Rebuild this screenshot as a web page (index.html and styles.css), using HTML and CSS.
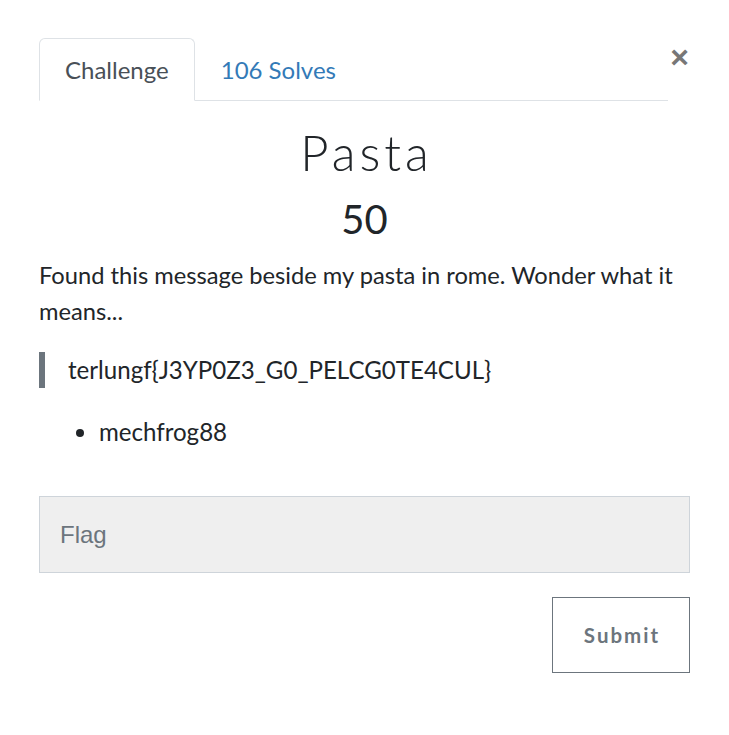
FILE: index.html
```html
<!DOCTYPE html>
<html>
<head>
<meta charset="utf-8">
<link rel="stylesheet" href="styles.css">
</head>
<body>
<div class="modal">
  <div class="header">
    <ul class="tabs">
      <li class="tab active">Challenge</li>
      <li class="tab link">106 Solves</li>
    </ul>
    <button class="close" aria-label="Close">&times;</button>
  </div>
  <h2 class="title">Pasta</h2>
  <h3 class="value">50</h3>
  <p class="desc">Found this message beside my pasta in rome. Wonder what it means...</p>
  <blockquote class="quote">terlungf{J3YP0Z3_G0_PELCG0TE4CUL}</blockquote>
  <ul class="list">
    <li>mechfrog88</li>
  </ul>
  <div class="form">
    <input class="flag" type="text" placeholder="Flag">
    <div class="actions">
      <button class="submit">Submit</button>
    </div>
  </div>
</div>
</body>
</html>
```
FILE: styles.css
```css
* { box-sizing: border-box; }
html, body { margin: 0; background: #fff; }
body {
  font-family: Lato, "Liberation Sans", sans-serif;
  color: #212529;
}
.modal {
  padding: 38px 39px 0 39px;
}
.header {
  display: flex;
  align-items: flex-start;
}
.tabs {
  flex: 1;
  display: flex;
  list-style: none;
  margin: 0;
  padding: 0;
  border-bottom: 1px solid #dee2e6;
}
.tab {
  height: 63px;
  padding: 0 25px;
  font-size: 24px;
  line-height: 62px;
  margin-bottom: -1px;
  border: 1px solid transparent;
  border-radius: 6px 6px 0 0;
}
.tab.active {
  color: #495057;
  border-color: #dee2e6 #dee2e6 #fff;
  background: #fff;
}
.tab.link { color: #337ab7; }
.close {
  width: 21px;
  margin-left: 1px;
  padding: 0;
  border: 0;
  background: none;
  color: #777;
  font-family: "Liberation Sans", sans-serif;
  font-size: 32px;
  font-weight: bold;
  line-height: 38px;
}
.title {
  margin: 22px 0 13px;
  text-align: center;
  font-family: Lato, sans-serif;
  font-weight: 300;
  font-size: 49px;
  letter-spacing: 4px;
  text-indent: 4px;
  line-height: 58px;
}
.value {
  margin: 0;
  text-align: center;
  font-weight: 400;
  font-size: 40px;
  line-height: 50px;
}
.desc {
  margin: 13px 0 23px;
  font-size: 23.7px;
  line-height: 36px;
}
.quote {
  margin: 0 0 26px;
  padding: 0 0 0 23px;
  border-left: 6px solid #6c757d;
  font-size: 24.1px;
  line-height: 36px;
}
.list {
  margin: 0;
  padding-left: 60px;
  font-size: 24.1px;
  line-height: 36px;
}
.form { margin-top: 46px; }
.flag {
  display: block;
  width: 100%;
  height: 77px;
  padding: 0 20px;
  background: #efefef;
  border: 1px solid #ced4da;
  font-family: "Liberation Sans", sans-serif;
  font-size: 24px;
  color: #495057;
}
.flag::placeholder { color: #6c757d; }
.actions {
  display: flex;
  justify-content: flex-end;
  margin-top: 24px;
}
.submit {
  width: 138px;
  height: 76px;
  background: #fff;
  border: 1px solid #6c757d;
  color: #6c757d;
  font-family: Lato, sans-serif;
  font-weight: 700;
  font-size: 20.5px;
  letter-spacing: 2px;
  text-indent: 2px;
}
```
